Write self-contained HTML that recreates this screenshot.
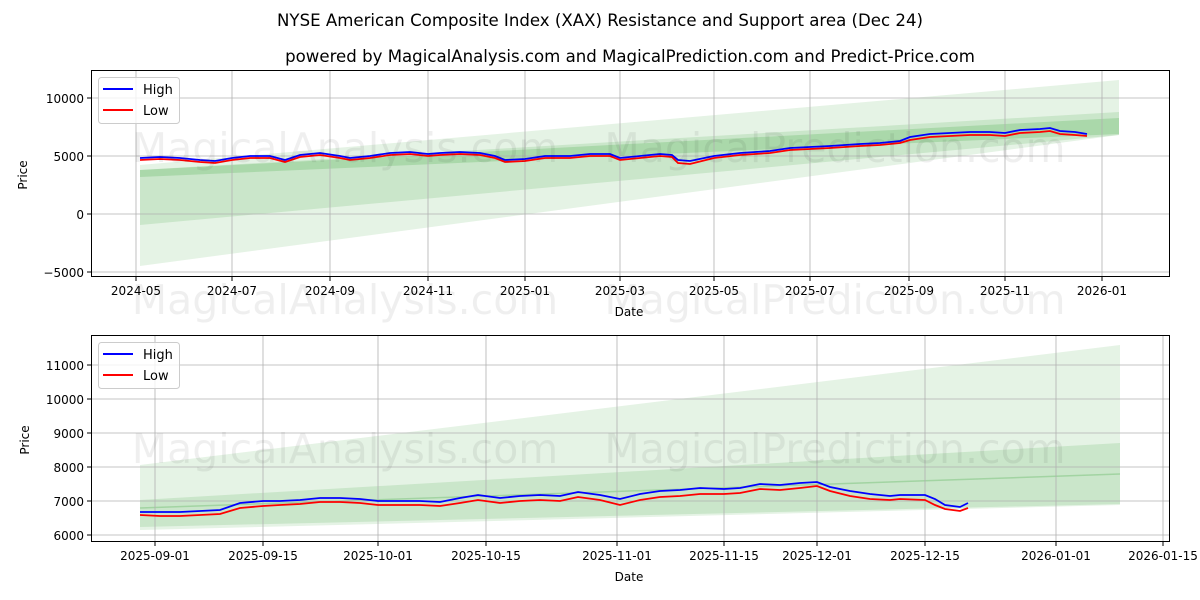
<!DOCTYPE html>
<html><head><meta charset="utf-8"><style>
html,body{margin:0;padding:0;background:#fff;}
svg{display:block;font-family:"DejaVu Sans","Liberation Sans",sans-serif;}
.t{font-size:12px;fill:#000}
.g{stroke:#b0b0b0;stroke-width:0.8}
.wm{font-size:41px;fill:#000;opacity:0.06}
</style></head><body>
<svg width="1200" height="600" viewBox="0 0 1200 600" xmlns="http://www.w3.org/2000/svg">
<rect width="1200" height="600" fill="#fff"/>
<text x="600" y="26" text-anchor="middle" style="font-size:16.6px">NYSE American Composite Index (XAX) Resistance and Support area (Dec 24)</text>
<text x="630" y="62" text-anchor="middle" style="font-size:16.6px">powered by MagicalAnalysis.com and MagicalPrediction.com and Predict-Price.com</text>

<!-- TOP CHART -->
<g>
<polygon points="140,165 1119,80 1119,135 140,266" fill="#2ca02c" opacity="0.12"/>
<polygon points="140,170 1119,112 1119,135 140,225" fill="#2ca02c" opacity="0.15"/>
<polygon points="140,170 1119,118 1119,134 140,177" fill="#2ca02c" opacity="0.2"/>
<g class="g">
<line x1="136" y1="70" x2="136" y2="276"/><line x1="232" y1="70" x2="232" y2="276"/><line x1="330" y1="70" x2="330" y2="276"/><line x1="428" y1="70" x2="428" y2="276"/><line x1="525" y1="70" x2="525" y2="276"/><line x1="620" y1="70" x2="620" y2="276"/><line x1="714" y1="70" x2="714" y2="276"/><line x1="810" y1="70" x2="810" y2="276"/><line x1="909" y1="70" x2="909" y2="276"/><line x1="1005" y1="70" x2="1005" y2="276"/><line x1="1102" y1="70" x2="1102" y2="276"/>
<line x1="91" y1="98" x2="1169" y2="98"/><line x1="91" y1="156" x2="1169" y2="156"/><line x1="91" y1="214" x2="1169" y2="214"/><line x1="91" y1="272" x2="1169" y2="272"/>
</g>
<polyline fill="none" stroke="#0000ff" stroke-width="1.8" points="140,158 160,157 180,158 200,160 215,161 232,158 250,156 270,156 285,160 300,155 320,153 340,156 350,158 370,156 390,153 410,152 428,154 440,153 460,152 480,153 495,156 505,160 525,159 545,156 570,156 590,154 610,154 620,158 640,156 660,154 672,155 678,160 690,161 714,156 740,153 770,151 790,148 810,147 830,146 860,144 880,143 900,141 910,137 930,134 950,133 970,132 990,132 1005,133 1020,130 1040,129 1050,128 1060,131 1075,132 1087,134"/>
<polyline fill="none" stroke="#ff0000" stroke-width="1.8" points="140,160 160,159 180,160 200,162 215,163 232,160 250,158 270,158 285,162 300,157 320,155 340,158 350,160 370,158 390,155 410,154 428,156 440,155 460,154 480,155 495,158 505,162 525,161 545,158 570,158 590,156 610,156 620,160 640,158 660,156 672,157 678,163 690,164 714,158 740,155 770,153 790,150 810,149 830,148 860,146 880,145 900,143 910,140 930,137 950,136 970,135 990,135 1005,136 1020,133 1040,132 1050,131 1060,134 1075,135 1087,136"/>
<text class="wm" x="345" y="162" text-anchor="middle">MagicalAnalysis.com</text>
<text class="wm" x="835" y="162" text-anchor="middle">MagicalPrediction.com</text>
<text class="wm" x="345" y="314" text-anchor="middle">MagicalAnalysis.com</text>
<text class="wm" x="835" y="314" text-anchor="middle">MagicalPrediction.com</text>
<rect x="91.5" y="70.5" width="1078" height="206" fill="none" stroke="#000" stroke-width="1"/>
<g stroke="#000"><line x1="87" y1="98" x2="91" y2="98"/><line x1="87" y1="156" x2="91" y2="156"/><line x1="87" y1="214" x2="91" y2="214"/><line x1="87" y1="272" x2="91" y2="272"/>
<line x1="136" y1="277" x2="136" y2="281"/><line x1="232" y1="277" x2="232" y2="281"/><line x1="330" y1="277" x2="330" y2="281"/><line x1="428" y1="277" x2="428" y2="281"/><line x1="525" y1="277" x2="525" y2="281"/><line x1="620" y1="277" x2="620" y2="281"/><line x1="714" y1="277" x2="714" y2="281"/><line x1="810" y1="277" x2="810" y2="281"/><line x1="909" y1="277" x2="909" y2="281"/><line x1="1005" y1="277" x2="1005" y2="281"/><line x1="1102" y1="277" x2="1102" y2="281"/></g>
<g class="t" text-anchor="end"><text x="84" y="103">10000</text><text x="84" y="161">5000</text><text x="84" y="219">0</text><text x="84" y="277">−5000</text></g>
<g class="t" text-anchor="middle"><text x="136" y="295">2024-05</text><text x="232" y="295">2024-07</text><text x="330" y="295">2024-09</text><text x="428" y="295">2024-11</text><text x="525" y="295">2025-01</text><text x="620" y="295">2025-03</text><text x="714" y="295">2025-05</text><text x="810" y="295">2025-07</text><text x="909" y="295">2025-09</text><text x="1005" y="295">2025-11</text><text x="1102" y="295">2026-01</text>
<text x="629" y="316">Date</text></g>
<text class="t" transform="translate(27,175) rotate(-90)" text-anchor="middle">Price</text>
<rect x="98.5" y="77.5" width="81" height="46" rx="3" fill="#fff" fill-opacity="0.8" stroke="#ccc"/>
<line x1="103" y1="89" x2="133" y2="89" stroke="#0000ff" stroke-width="2"/><text class="t" x="143" y="94" style="font-size:13px">High</text>
<line x1="103" y1="110" x2="133" y2="110" stroke="#ff0000" stroke-width="2"/><text class="t" x="143" y="115" style="font-size:13px">Low</text>
</g>

<!-- BOTTOM CHART -->
<g>
<polygon points="140,465 1120,345 1120,505 140,530" fill="#2ca02c" opacity="0.12"/>
<polygon points="140,500 1120,443 1120,504 140,527" fill="#2ca02c" opacity="0.15"/>
<line x1="140" y1="508" x2="1120" y2="474" stroke="#2ca02c" stroke-opacity="0.25" stroke-width="1.5"/>
<g class="g">
<line x1="155" y1="335" x2="155" y2="541"/><line x1="263" y1="335" x2="263" y2="541"/><line x1="378" y1="335" x2="378" y2="541"/><line x1="486" y1="335" x2="486" y2="541"/><line x1="617" y1="335" x2="617" y2="541"/><line x1="724" y1="335" x2="724" y2="541"/><line x1="817" y1="335" x2="817" y2="541"/><line x1="925" y1="335" x2="925" y2="541"/><line x1="1056" y1="335" x2="1056" y2="541"/><line x1="1163" y1="335" x2="1163" y2="541"/>
<line x1="91" y1="365" x2="1169" y2="365"/><line x1="91" y1="399" x2="1169" y2="399"/><line x1="91" y1="433" x2="1169" y2="433"/><line x1="91" y1="467" x2="1169" y2="467"/><line x1="91" y1="501" x2="1169" y2="501"/><line x1="91" y1="535" x2="1169" y2="535"/>
</g>
<polyline fill="none" stroke="#0000ff" stroke-width="1.8" points="140,512 160,512 180,512 200,511 220,510 240,503 263,501 280,501 300,500 320,498 340,498 360,499 378,501 400,501 420,501 440,502 460,498 478,495 500,498 520,496 540,495 560,496 578,492 600,495 620,499 640,494 660,491 680,490 700,488 724,489 740,488 760,484 780,485 800,483 817,482 830,487 850,491 870,494 890,496 900,495 925,495 935,499 945,505 960,507 968,503"/>
<polyline fill="none" stroke="#ff0000" stroke-width="1.8" points="140,515 160,516 180,516 200,515 220,514 240,508 263,506 280,505 300,504 320,502 340,502 360,503 378,505 400,505 420,505 440,506 460,503 478,500 500,503 520,501 540,500 560,501 578,497 600,500 620,505 640,500 660,497 680,496 700,494 724,494 740,493 760,489 780,490 800,488 817,486 830,491 850,496 870,499 890,500 900,499 925,500 935,505 945,509 960,511 968,508"/>
<text class="wm" x="345" y="463" text-anchor="middle">MagicalAnalysis.com</text>
<text class="wm" x="835" y="463" text-anchor="middle">MagicalPrediction.com</text>
<rect x="91.5" y="335.5" width="1078" height="206" fill="none" stroke="#000" stroke-width="1"/>
<g stroke="#000"><line x1="87" y1="365" x2="91" y2="365"/><line x1="87" y1="399" x2="91" y2="399"/><line x1="87" y1="433" x2="91" y2="433"/><line x1="87" y1="467" x2="91" y2="467"/><line x1="87" y1="501" x2="91" y2="501"/><line x1="87" y1="535" x2="91" y2="535"/>
<line x1="155" y1="542" x2="155" y2="546"/><line x1="263" y1="542" x2="263" y2="546"/><line x1="378" y1="542" x2="378" y2="546"/><line x1="486" y1="542" x2="486" y2="546"/><line x1="617" y1="542" x2="617" y2="546"/><line x1="724" y1="542" x2="724" y2="546"/><line x1="817" y1="542" x2="817" y2="546"/><line x1="925" y1="542" x2="925" y2="546"/><line x1="1056" y1="542" x2="1056" y2="546"/><line x1="1163" y1="542" x2="1163" y2="546"/></g>
<g class="t" text-anchor="end"><text x="84" y="370">11000</text><text x="84" y="404">10000</text><text x="84" y="438">9000</text><text x="84" y="472">8000</text><text x="84" y="506">7000</text><text x="84" y="540">6000</text></g>
<g class="t" text-anchor="middle"><text x="155" y="560">2025-09-01</text><text x="263" y="560">2025-09-15</text><text x="378" y="560">2025-10-01</text><text x="486" y="560">2025-10-15</text><text x="617" y="560">2025-11-01</text><text x="724" y="560">2025-11-15</text><text x="817" y="560">2025-12-01</text><text x="925" y="560">2025-12-15</text><text x="1056" y="560">2026-01-01</text><text x="1163" y="560">2026-01-15</text>
<text x="629" y="581">Date</text></g>
<text class="t" transform="translate(29,440) rotate(-90)" text-anchor="middle">Price</text>
<rect x="98.5" y="342.5" width="81" height="46" rx="3" fill="#fff" fill-opacity="0.8" stroke="#ccc"/>
<line x1="103" y1="354" x2="133" y2="354" stroke="#0000ff" stroke-width="2"/><text class="t" x="143" y="359" style="font-size:13px">High</text>
<line x1="103" y1="375" x2="133" y2="375" stroke="#ff0000" stroke-width="2"/><text class="t" x="143" y="380" style="font-size:13px">Low</text>
</g>
</svg>
</body></html>
